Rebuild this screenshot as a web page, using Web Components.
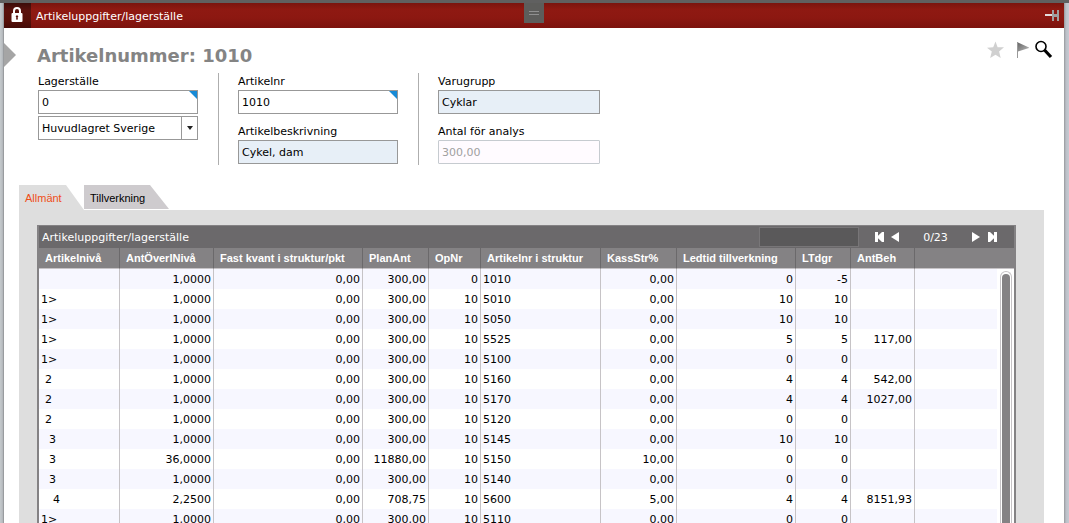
<!DOCTYPE html>
<html lang="sv">
<head>
<meta charset="utf-8">
<title>Artikeluppgifter/lagerställe</title>
<style>
  html, body { margin: 0; height: 100%; }
  body { font: 11px/16px "DejaVu Sans", Verdana, sans-serif; color: #000; background: #fff; overflow: hidden; }
</style>
</head>
<body>
<app-window>
  <title-bar slot="bar">Artikeluppgifter/lagerställe</title-bar>
  <page-heading>Artikelnummer: 1010</page-heading>
  <field-groups>
    <field-group>
      <text-field label="Lagerställe" value="0" kind="lookup"></text-field>
      <select-field label="Lagerställets namn" value="Huvudlagret Sverige"></select-field>
    </field-group>
    <field-group class="spaced">
      <text-field label="Artikelnr" value="1010" kind="lookup"></text-field>
      <text-field label="Artikelbeskrivning" value="Cykel, dam" kind="readonly"></text-field>
    </field-group>
    <field-group class="spaced wide">
      <text-field label="Varugrupp" value="Cyklar" kind="readonly"></text-field>
      <text-field label="Antal för analys" value="300,00" kind="disabled"></text-field>
    </field-group>
  </field-groups>
  <tab-panel>
    <data-grid heading="Artikeluppgifter/lagerställe" position="0/23"></data-grid>
  </tab-panel>
</app-window>

<script>
const define = (name, html, setup) => {
  const template = document.createElement('template');
  template.innerHTML = html;
  customElements.define(name, class extends HTMLElement {
    constructor() {
      super();
      this.attachShadow({ mode: 'open' }).append(template.content.cloneNode(true));
    }
    connectedCallback() {
      if (setup && !this.ready) { this.ready = true; setup(this, this.shadowRoot); }
    }
  });
};

define('app-window', `
  <style>
    :host { display: flex; flex-direction: column; box-sizing: border-box; height: 100vh; overflow: hidden;
      border-top: 3px solid #606060; }
    .frame { flex: 1; min-height: 0; display: flex; }
    .edge { flex: none; width: 4px; background: linear-gradient(90deg, #c5cacd, #b8bcc0 60%, #8b8d90); }
    .edge.right { width: 5px; background: linear-gradient(90deg, #96999c, #bcc0c8 40%, #c6cad2); }
    .page { flex: 1; min-width: 0; display: flex; flex-direction: column; background: #fff; }
    main { flex: 1; min-height: 0; display: flex; flex-direction: column; }
  </style>
  <div class="frame">
    <div class="edge"></div>
    <div class="page">
      <slot name="bar"></slot>
      <main><slot></slot></main>
    </div>
    <div class="edge right"></div>
  </div>`);

define('title-bar', `
  <style>
    :host { position: relative; flex: none; display: flex; align-items: center; height: 25px; color: #fff;
      background: linear-gradient(#7a150f, #8f1912 25%, #8c1811 60%, #7c130d); }
    button { border: 0; padding: 0; display: flex; align-items: center; justify-content: center; background: none; }
    .lock { box-sizing: border-box; width: 27px; height: 25px; padding: 0 2px 2px 0;
      background: linear-gradient(#3c0d0a, #5a120d 30%, #571009 70%, #450b07); }
    .name { flex: 1; padding: 2px 0 0 5px; }
    .pin { width: 20px; height: 25px; margin-right: 2px; }
    .handle { position: absolute; left: 520px; top: -3px; width: 20px; height: 23px; padding-top: 3px;
      box-sizing: border-box; background: #5d5d5b; }
    svg { display: block; }
  </style>
  <button class="lock" aria-label="Lås">
    <svg width="12" height="15" viewBox="0 0 12 15"><path d="M3 6.500V4a3 3 0 0 1 6 0v2.500" fill="none" stroke="#fff" stroke-width="2"/><rect x="0.500" y="6" width="11" height="9" rx="1" fill="#fff"/><path d="M5 12.500h2l-.4-2a1.200 1.200 0 1 0-1.200 0z" fill="#5a120d"/></svg>
  </button>
  <span class="name"><slot></slot></span>
  <button class="pin" aria-label="Fäst">
    <svg width="14" height="11" viewBox="0 0 14 11"><path d="M0 5h7" stroke="#e4dcdc" stroke-width="2"/><path d="M7 0h2v4h3V0h2v11h-2V7H9v4H7z" fill="#a0a0a0"/></svg>
  </button>
  <button class="handle" aria-label="Visa meny">
    <svg width="10" height="4" viewBox="0 0 10 4"><path d="M0 .5h10M0 3.500h10" stroke="#909090"/></svg>
  </button>`);

define('page-heading', `
  <style>
    :host { position: relative; flex: none; display: flex; align-items: flex-start; padding: 12px 10px 0 33px; height: 33px; }
    h1 { flex: 1; margin: 5px 0 0; font-size: 18px; line-height: 22px; font-weight: bold; color: #848484; }
    .marker { position: absolute; left: 0; top: 15px; }
    .tools { display: flex; gap: 5px; }
    button { border: 0; padding: 0; background: none; display: block; }
    svg { display: block; }
  </style>
  <svg class="marker" width="12" height="24" viewBox="0 0 12 24"><path d="M0 0l12 12L0 24z" fill="#a5a5a5"/></svg>
  <h1><slot></slot></h1>
  <div class="tools">
    <button aria-label="Favorit"><svg width="20" height="20" viewBox="0 0 20 20"><path d="M9.500 1.500l2.100 5.700 6.400.1-4.900 4.100 1.600 6.600-5.200-3.300-5.300 3.400 1.600-6.600L1 7.700l6.200-.4z" fill="#d0d0d0"/></svg></button>
    <button aria-label="Flagga"><svg width="18" height="20" viewBox="0 0 18 20"><defs><linearGradient id="f" x1="0" y1="0" x2="1" y2="1"><stop offset="0" stop-color="#666"/><stop offset=".6" stop-color="#999"/><stop offset="1" stop-color="#ccc"/></linearGradient></defs><path d="M6.500 2v16" stroke="#999"/><path d="M7 2.500l11.500 5.300L7 11.500z" fill="url(#f)"/></svg></button>
    <button aria-label="Sök"><svg width="20" height="20" viewBox="0 0 20 20"><circle cx="7" cy="6.500" r="5" fill="none" stroke="#000" stroke-width="1.600"/><path d="M10.500 10l6.500 7" stroke="#000" stroke-width="3.200"/></svg></button>
  </div>`);

define('field-groups', `
  <style>:host { flex: none; display: flex; padding: 0 14px 20px 34px; }</style><slot></slot>`);

define('field-group', `
  <style>
    :host { display: flex; flex-direction: column; gap: 2px; box-sizing: border-box; height: 92px;
      width: 180px; padding-right: 20px; }
    :host(.spaced) { gap: 9px; width: 200px; padding-left: 19px; border-left: 1px solid #aeaeae; }
    :host(.wide) { width: 182px; padding-right: 0; }
  </style><slot></slot>`);

define('text-field', `
  <style>
    :host { display: block; position: relative; }
    label { display: block; height: 17px; line-height: 18px; }
    input { display: block; box-sizing: border-box; width: 100%; height: 24px; margin: 0; padding: 0 3px;
      border: 1px solid #989898; border-radius: 0; background: #fff; font: inherit; color: #000; }
    :host([kind="readonly"]) input { background: #e7eff7; }
    :host([kind="disabled"]) input { background: #fffbff; color: #a0a0a0; border-color: #c6cbd0; border-radius: 1px; }
    svg { display: none; position: absolute; right: 1px; top: 18px; }
    :host([kind="lookup"]) svg { display: block; }
  </style>
  <label for="i"></label>
  <input id="i" type="text">
  <svg width="8" height="8" viewBox="0 0 8 8"><path d="M0 0h8v8z" fill="#188ad6"/></svg>`,
  (host, root) => {
    const input = root.querySelector('input');
    root.querySelector('label').textContent = host.getAttribute('label');
    input.value = host.getAttribute('value');
    input.readOnly = host.getAttribute('kind') === 'readonly';
    input.disabled = host.getAttribute('kind') === 'disabled';
  });

define('select-field', `
  <style>
    :host { display: block; position: relative; }
    select { display: block; appearance: none; box-sizing: border-box; width: 100%; height: 24px; margin: 0;
      padding: 1px 18px 0 3px; border: 1px solid #989898; border-radius: 0; background: #fff; font: inherit; color: #000; }
    .arrow { position: absolute; right: 1px; top: 1px; width: 15px; height: 22px; border-left: 1px solid #989898;
      display: flex; align-items: center; justify-content: center; pointer-events: none; }
  </style>
  <select><option></option></select>
  <span class="arrow"><svg width="6" height="4" viewBox="0 0 6 4"><path d="M0 0h6L3 4z" fill="#222"/></svg></span>`,
  (host, root) => {
    root.querySelector('select').setAttribute('aria-label', host.getAttribute('label'));
    root.querySelector('option').textContent = host.getAttribute('value');
  });

define('tab-panel', `
  <style>
    :host { flex: 1; min-height: 0; display: flex; flex-direction: column; margin: 0 20px 0 15px; }
    .tabs { flex: none; display: flex; align-items: flex-start; }
    button { box-sizing: border-box; border: 0; margin: 0; padding: 2px 0 0 6px; height: 24px; width: 85px; text-align: left;
      color: #000; font: 11px/22px "Liberation Sans", Arial, sans-serif; background: #cecbce;
      clip-path: polygon(0 0, 66px 0, 100% 100%, 0 100%); }
    button.on { width: 65px; height: 25px; color: #f04e18; background: #dedede; padding-bottom: 1px;
      clip-path: polygon(0 0, 47px 0, 100% 100%, 0 100%); }
    .panel { flex: 1; min-height: 0; display: flex; flex-direction: column; padding: 15px 28px 0 18px; background: #dedede; }
  </style>
  <div class="tabs" role="tablist">
    <button class="on" role="tab" aria-selected="true">Allmänt</button>
    <button role="tab" aria-selected="false">Tillverkning</button>
  </div>
  <div class="panel"><slot></slot></div>`);

define('grid-pager', `
  <style>
    :host { display: flex; align-items: center; color: #fff; }
    input { box-sizing: border-box; width: 100px; height: 20px; margin: 0 16px 0 0; padding: 0 3px; border: 1px solid #787678;
      background: #5a595a; color: #fff; font: inherit; }
    button { border: 0; margin: 0; padding: 0; width: 16px; height: 16px; background: none; display: flex; align-items: center; justify-content: flex-start; }
    .pos { box-sizing: border-box; width: 65px; padding: 2px 8px 0 0; text-align: center; }
    svg { fill: #fff; }
  </style>
  <input type="text" aria-label="Sök i listan">
  <button aria-label="Första"><svg width="10" height="10" viewBox="0 0 10 10"><path d="M0 0h3v3.700L7 0h2v10H7L3 6.300V10H0z"/></svg></button>
  <button aria-label="Föregående"><svg width="9" height="10" viewBox="0 0 9 10"><path d="M8 0v10L0 5z"/></svg></button>
  <span class="pos"></span>
  <button aria-label="Nästa"><svg width="9" height="10" viewBox="0 0 9 10"><path d="M0 0v10l8-5z"/></svg></button>
  <button aria-label="Sista"><svg width="10" height="10" viewBox="0 0 10 10"><path d="M9 0H6v3.700L2 0H0v10h2l4-3.700V10h3z"/></svg></button>`);

const columns = [
  ['Artikelnivå', 81], ['AntÖverlNivå', 94, 'n'], ['Fast kvant i struktur/pkt', 149, 'n'], ['PlanAnt', 66, 'n'],
  ['OpNr', 52, 'n'], ['Artikelnr i struktur', 120], ['KassStr%', 76, 'n'], ['Ledtid tillverkning', 119, 'n'],
  ['LTdgr', 55, 'n'], ['AntBeh', 64, 'n'], ['', 0]
];
const rows = [
  ['', '1,0000', '0,00', '300,00', '0', '1010', '0,00', '0', '-5', ''],
  ['1>', '1,0000', '0,00', '300,00', '10', '5010', '0,00', '10', '10', ''],
  ['1>', '1,0000', '0,00', '300,00', '10', '5050', '0,00', '10', '10', ''],
  ['1>', '1,0000', '0,00', '300,00', '10', '5525', '0,00', '5', '5', '117,00'],
  ['1>', '1,0000', '0,00', '300,00', '10', '5100', '0,00', '0', '0', ''],
  ['2', '1,0000', '0,00', '300,00', '10', '5160', '0,00', '4', '4', '542,00'],
  ['2', '1,0000', '0,00', '300,00', '10', '5170', '0,00', '4', '4', '1027,00'],
  ['2', '1,0000', '0,00', '300,00', '10', '5120', '0,00', '0', '0', ''],
  ['3', '1,0000', '0,00', '300,00', '10', '5145', '0,00', '10', '10', ''],
  ['3', '36,0000', '0,00', '11880,00', '10', '5150', '10,00', '0', '0', ''],
  ['3', '1,0000', '0,00', '300,00', '10', '5140', '0,00', '0', '0', ''],
  ['4', '2,2500', '0,00', '708,75', '10', '5600', '5,00', '4', '4', '8151,93'],
  ['1>', '1,0000', '0,00', '300,00', '10', '5110', '0,00', '0', '0', '']
];

define('data-grid', `
  <style>
    :host { flex: 1; min-height: 0; display: flex; flex-direction: column; box-sizing: border-box;
      border: solid #848284; border-width: 1px 2px 0; background: #fff; }
    .top { flex: none; display: flex; align-items: center; justify-content: space-between; height: 22px;
      padding: 0 10px 0 3px; background: #6b696b; color: #fff; }
    .heading { padding-top: 2px; }
    .body { flex: 1; min-height: 0; display: flex; overflow: hidden; }
    .rows { flex: 1; min-width: 0; }
    table { width: 100%; table-layout: fixed; border-collapse: separate; border-spacing: 0; }
    th, td { box-sizing: border-box; height: 20px; padding: 2px 2px 0; line-height: 18px; white-space: nowrap; text-align: left;
      border-right: 1px solid #c6c3c6; }
    th { height: 21px; padding: 0 0 0 6px; background: #848284; color: #fff; border-right-color: #6b696b;
      border-bottom: 1px solid #c6c3c6; font: bold 11px/20px "Liberation Sans", Arial, sans-serif; }
    th:last-child, td:last-child { border-right: 0; }
    td.n { text-align: right; }
    tbody tr:nth-child(odd) { background: #f7f7ff; }
    td.level2 { padding-left: 6px; }
    td.level3 { padding-left: 10px; }
    td.level4 { padding-left: 14px; }
    .gutter { flex: none; width: 17px; display: flex; flex-direction: column; }
    .cap { flex: none; height: 20px; background: #848284; border-bottom: 1px solid #c6c3c6; }
    .track { flex: 1; margin: 2px 2px 0 3px; padding: 2px 1px 0; border: 1px solid #c6c3c6; border-bottom: 0; border-radius: 6px 6px 0 0; display: flex; }
    .thumb { flex: 1; background: #848284; border-radius: 4px 4px 0 0; }
  </style>
  <div class="top"><span class="heading"></span><grid-pager></grid-pager></div>
  <div class="body">
    <div class="rows"><table><colgroup></colgroup><thead><tr></tr></thead><tbody></tbody></table></div>
    <div class="gutter"><div class="cap"></div><div class="track"><div class="thumb"></div></div></div>
  </div>`,
  (host, root) => {
    root.querySelector('.heading').textContent = host.getAttribute('heading');
    const pager = root.querySelector('grid-pager');
    pager.shadowRoot.querySelector('.pos').textContent = host.getAttribute('position');
    const group = root.querySelector('colgroup'), head = root.querySelector('thead tr'), body = root.querySelector('tbody');
    for (const [name, width] of columns) {
      const col = document.createElement('col');
      if (width) col.style.width = width + 'px';
      group.append(col);
      const th = document.createElement('th');
      th.textContent = name;
      head.append(th);
    }
    for (const row of rows) {
      const tr = body.insertRow();
      columns.forEach(([, , kind], i) => {
        const td = tr.insertCell();
        td.textContent = row[i] || '';
        if (kind) td.className = kind;
        if (i === 0 && /^[2-9]$/.test(row[0])) td.className = 'level' + row[0];
      });
    }
  });
</script>
</body>
</html>
